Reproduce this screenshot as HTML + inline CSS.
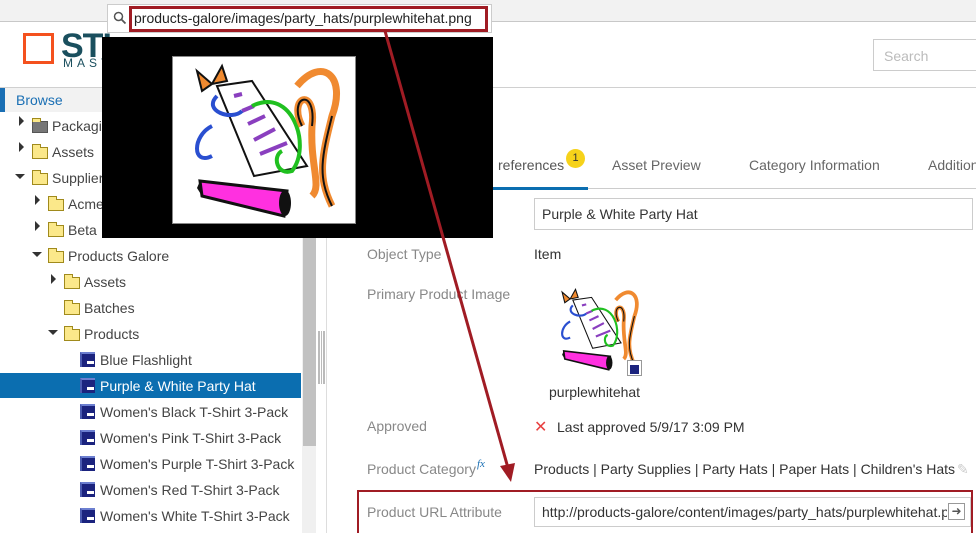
<!DOCTYPE html>
<html><head><meta charset="utf-8"><style>
*{margin:0;padding:0;box-sizing:border-box}
body{width:976px;height:533px;overflow:hidden;background:#fff;font-family:"Liberation Sans",Arial,sans-serif;position:relative;color:#333}
.a{position:absolute;white-space:nowrap}
.tree{font-size:14px;color:#444}
.lbl{font-size:14px;color:#888}
.val{font-size:14px;color:#333}
.fold{position:absolute;width:16px;height:12px;background:#fbe88a;border:1px solid #a08a1c}
.fold:before{content:"";position:absolute;left:-1px;top:-4px;width:7px;height:3px;background:#fbe88a;border:1px solid #a08a1c;border-bottom:none}
.tri-r{position:absolute;width:0;height:0;border-left:5px solid #333;border-top:5px solid transparent;border-bottom:5px solid transparent}
.tri-d{position:absolute;width:0;height:0;border-top:5px solid #333;border-left:5px solid transparent;border-right:5px solid transparent}
.item{position:absolute;width:15px;height:15px;background:#1b237e;border-top:2px solid #6c7fd0;border-left:2px solid #4a5ab0}
.item:after{content:"";position:absolute;left:5px;top:7px;width:7px;height:3px;background:#fff}
</style></head><body>
<svg width="0" height="0" style="position:absolute"><defs>
<symbol id="hat" viewBox="0 0 184 168">
<path d="M45 30 L80 25 L135 110 L82 120 Z" fill="#fff" stroke="#111" stroke-width="2"/>
<path d="M62 40 L70 38 M70 55 L82 50 M76 68 L93 60 M82 84 L103 73 M88 98 L115 87" stroke="#8a3fbf" stroke-width="4"/>
<path d="M40 70 C20 80 20 110 40 100 M45 40 C30 55 60 65 70 55" stroke="#2a4fd0" stroke-width="4" fill="none"/>
<path d="M80 50 C120 30 140 90 120 115 C105 120 100 100 110 95" stroke="#20c020" stroke-width="4" fill="none"/>
<path d="M125 30 C150 0 175 20 160 60 C150 100 145 120 160 150 M130 70 C115 40 145 30 140 70 C138 110 150 130 140 140" stroke="#f08a30" stroke-width="7" fill="none"/>
<path d="M130 70 C115 40 145 30 140 70 M160 60 C150 100 145 120 160 150" stroke="#111" stroke-width="2" fill="none"/>
<path d="M25 15 L40 28 L30 35 Z M40 28 L50 10 L55 25 Z" fill="#f08a30" stroke="#111" stroke-width="2"/>
<path d="M28 125 L115 135 L112 160 L30 140 Z" fill="#ff30e0" stroke="#111" stroke-width="3"/>
<path d="M28 125 L25 132 L30 140 Z" fill="#111"/>
<ellipse cx="113" cy="147" rx="6" ry="13" fill="#111"/>
</symbol></defs></svg>

<div class="a" style="left:0;top:0;width:976px;height:22px;background:#f2f2f2;border-bottom:1px solid #c8c8c8"></div>
<div class="a" style="left:0;top:87px;width:976px;height:1px;background:#d0d0d0"></div>
<div class="a" style="left:23px;top:33px;width:31px;height:31px;border:3px solid #f4511e"></div>
<div class="a" style="left:61px;top:27px;font-size:34px;font-weight:bold;color:#1a4f5e;letter-spacing:-1px">STI</div>
<div class="a" style="left:63px;top:56px;font-size:12px;letter-spacing:4px;color:#1a4f5e">MASTER</div>
<div class="a" style="left:873px;top:39px;width:110px;height:32px;border:1px solid #ccc;font-size:14px;color:#bbb;padding:8px 10px">Search</div>

<div class="a" style="left:0;top:88px;width:302px;height:24px;background:#f2f2f2"></div>
<div class="a" style="left:0;top:88px;width:5px;height:24px;background:#1a6fb4"></div>
<div class="a" style="left:16px;top:92px;font-size:14px;color:#1a6fb4">Browse</div>
<div class="a" style="left:302px;top:88px;width:14px;height:445px;background:#f0f0f0"></div>
<div class="a" style="left:303px;top:88px;width:13px;height:358px;background:#c1c1c1"></div>
<div class="a" style="left:316px;top:88px;width:10px;height:445px;background:#fff"></div>
<div class="a" style="left:326px;top:88px;width:1px;height:445px;background:#ddd"></div>
<div class="a" style="left:318px;top:331px;width:7px;height:53px;border-left:1px solid #bbb;border-right:1px solid #bbb;background:repeating-linear-gradient(90deg,#bbb 0 1px,#fff 1px 2px)"></div>

<div class="tree">
<div class="tri-r" style="left:19px;top:116px"></div><div class="fold" style="left:32px;top:121px;background:#777;border-color:#555"></div><div class="a" style="left:52px;top:118px">Packaging</div>
<div class="tri-r" style="left:19px;top:142px"></div><div class="fold" style="left:32px;top:147px"></div><div class="a" style="left:52px;top:144px">Assets</div>
<div class="tri-d" style="left:15px;top:174px"></div><div class="fold" style="left:32px;top:173px"></div><div class="a" style="left:52px;top:170px">Suppliers</div>
<div class="tri-r" style="left:35px;top:195px"></div><div class="fold" style="left:48px;top:199px"></div><div class="a" style="left:68px;top:196px">Acme</div>
<div class="tri-r" style="left:35px;top:221px"></div><div class="fold" style="left:48px;top:225px"></div><div class="a" style="left:68px;top:222px">Beta</div>
<div class="tri-d" style="left:32px;top:252px"></div><div class="fold" style="left:48px;top:251px"></div><div class="a" style="left:68px;top:248px">Products Galore</div>
<div class="tri-r" style="left:51px;top:274px"></div><div class="fold" style="left:64px;top:277px"></div><div class="a" style="left:84px;top:274px">Assets</div>
<div class="fold" style="left:64px;top:303px"></div><div class="a" style="left:84px;top:300px">Batches</div>
<div class="tri-d" style="left:48px;top:330px"></div><div class="fold" style="left:64px;top:329px"></div><div class="a" style="left:84px;top:326px">Products</div>
<div class="item" style="left:80px;top:352px"></div><div class="a" style="left:100px;top:352px">Blue Flashlight</div>
<div class="a" style="left:0;top:373px;width:301px;height:25px;background:#0b6eb0"></div>
<div class="item" style="left:80px;top:378px"></div><div class="a" style="left:100px;top:378px;color:#fff">Purple &amp; White Party Hat</div>
<div class="item" style="left:80px;top:404px"></div><div class="a" style="left:100px;top:404px">Women's Black T-Shirt 3-Pack</div>
<div class="item" style="left:80px;top:430px"></div><div class="a" style="left:100px;top:430px">Women's Pink T-Shirt 3-Pack</div>
<div class="item" style="left:80px;top:456px"></div><div class="a" style="left:100px;top:456px">Women's Purple T-Shirt 3-Pack</div>
<div class="item" style="left:80px;top:482px"></div><div class="a" style="left:100px;top:482px">Women's Red T-Shirt 3-Pack</div>
<div class="item" style="left:80px;top:508px"></div><div class="a" style="left:100px;top:508px">Women's White T-Shirt 3-Pack</div>
</div>

<div class="a" style="left:327px;top:188px;width:649px;height:1px;background:#ccc"></div>
<div class="a" style="left:330px;top:187px;width:258px;height:3px;background:#0b6eb0"></div>
<div class="a" style="left:498px;top:157px;font-size:14px;color:#555">references</div>
<div class="a" style="left:566px;top:149px;width:19px;height:19px;border-radius:50%;background:#f6d21a;font-size:11px;text-align:center;line-height:19px;color:#333">1</div>
<div class="a" style="left:612px;top:157px;font-size:14px;color:#666">Asset Preview</div>
<div class="a" style="left:749px;top:157px;font-size:14px;color:#666">Category Information</div>
<div class="a" style="left:928px;top:157px;font-size:14px;color:#666">Addition</div>

<div class="a" style="left:534px;top:198px;width:439px;height:32px;border:1px solid #ccc"></div>
<div class="a val" style="left:542px;top:206px">Purple &amp; White Party Hat</div>
<div class="a lbl" style="left:367px;top:246px">Object Type</div>
<div class="a val" style="left:534px;top:246px">Item</div>
<div class="a lbl" style="left:367px;top:286px">Primary Product Image</div>
<svg class="a" style="left:548px;top:284px" width="100" height="90"><use href="#hat"/></svg>
<div class="a" style="left:627px;top:360px;width:15px;height:16px;border:1px solid #999;background:#fff"><div style="margin:4px 0 0 2px;width:9px;height:9px;background:#1b237e"></div></div>
<div class="a val" style="left:549px;top:384px">purplewhitehat</div>
<div class="a lbl" style="left:367px;top:418px">Approved</div>
<div class="a" style="left:534px;top:417px;font-size:16px;color:#e84040">✕</div>
<div class="a val" style="left:557px;top:419px">Last approved 5/9/17 3:09 PM</div>
<div class="a lbl" style="left:367px;top:461px">Product Category</div>
<div class="a" style="left:477px;top:458px;font-size:11px;font-style:italic;color:#1a6fb4;font-family:'Liberation Serif',serif">fx</div>
<div class="a val" style="left:534px;top:461px">Products | Party Supplies | Party Hats | Paper Hats | Children's Hats</div>
<div class="a" style="left:957px;top:461px;font-size:14px;color:#ccc">✎</div>
<div class="a lbl" style="left:367px;top:504px">Product URL Attribute</div>
<div class="a" style="left:534px;top:497px;width:437px;height:30px;border:1px solid #ccc;overflow:hidden"></div>
<div class="a val" style="left:542px;top:504px;width:405px;overflow:hidden">http://products-galore/content/images/party_hats/purplewhitehat.png</div>
<div class="a" style="left:948px;top:503px;width:17px;height:17px;border:1px solid #999;font-size:12px;line-height:15px;text-align:center;color:#555">➜</div>
<div class="a" style="left:357px;top:490px;width:616px;height:43px;border:2px solid #a01c24;border-bottom:none"></div>

<div class="a" style="left:107px;top:4px;width:385px;height:29px;background:#fff;border:1px solid #ccc"></div>
<svg class="a" style="left:113px;top:11px" width="14" height="14"><circle cx="5.5" cy="5.5" r="4" stroke="#555" stroke-width="1.5" fill="none"/><path d="M8.5 8.5 L12.5 12.5" stroke="#555" stroke-width="1.8"/></svg>
<div class="a" style="left:129px;top:6px;width:359px;height:26px;border:3px solid #a01c24"></div>
<div class="a" style="left:134px;top:10px;font-size:14px;color:#222">products-galore/images/party_hats/purplewhitehat.png</div>
<div class="a" style="left:102px;top:37px;width:391px;height:201px;background:#000"></div>
<div class="a" style="left:172px;top:56px;width:184px;height:168px;background:#fff;border:1px solid #888"></div>
<svg class="a" style="left:172px;top:56px" width="184" height="168"><use href="#hat"/></svg>

<svg class="a" style="left:0;top:0" width="976" height="533">
<path d="M385 31 L508 468" stroke="#a01c24" stroke-width="3" fill="none"/>
<path d="M500 466 L511 482 L515 463 Z" fill="#a01c24"/>
</svg>
</body></html>
